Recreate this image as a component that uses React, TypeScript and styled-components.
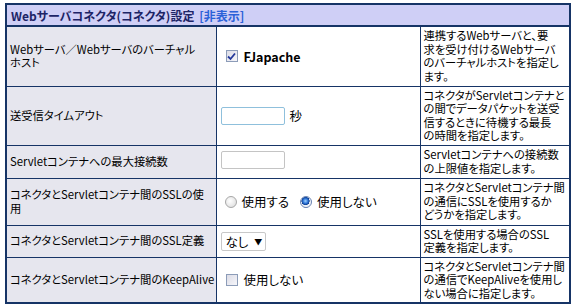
import React from 'react';
import styled, { createGlobalStyle } from 'styled-components';

const GlobalStyle = createGlobalStyle`
  body {
    margin: 0;
    padding: 3px 0 0 5px;
    background: #ffffff;
    font-family: 'Noto Sans CJK JP', 'Liberation Sans', sans-serif;
    font-feature-settings: 'palt';
    font-size: 12px;
    color: #000;
  }
`;

type Row = {
  label: React.ReactNode;
  control: React.ReactNode;
  desc: React.ReactNode;
  height: number;
};

function App() {
  const rows: Row[] = [
    {
      label: (
        <>
          Webサーバ／Webサーバのバーチャル
          <br />
          ホスト
        </>
      ),
      control: (
        <Inline>
          <CheckBox checked />
          <BoldText>FJapache</BoldText>
        </Inline>
      ),
      desc: (
        <>
          連携するWebサーバと、要
          <br />
          求を受け付けるWebサーバ
          <br />
          のバーチャルホストを指定し
          <br />
          ます。
        </>
      ),
      height: 60,
    },
    {
      label: '送受信タイムアウト',
      control: (
        <Inline>
          <TextBox $tone="focus" />
          <Unit>秒</Unit>
        </Inline>
      ),
      desc: (
        <>
          コネクタがServletコンテナと
          <br />
          の間でデータパケットを送受
          <br />
          信するときに待機する最長
          <br />
          の時間を指定します。
        </>
      ),
      height: 59,
    },
    {
      label: 'Servletコンテナへの最大接続数',
      control: <TextBox $tone="plain" />,
      desc: (
        <>
          Servletコンテナへの接続数
          <br />
          の上限値を指定します。
        </>
      ),
      height: 33,
    },
    {
      label: (
        <>
          コネクタとServletコンテナ間のSSLの使
          <br />
          用
        </>
      ),
      control: (
        <Inline>
          <RadioItem>
            <Radio />
            使用する
          </RadioItem>
          <RadioItem>
            <Radio checked />
            使用しない
          </RadioItem>
        </Inline>
      ),
      desc: (
        <>
          コネクタとServletコンテナ間
          <br />
          の通信にSSLを使用するか
          <br />
          どうかを指定します。
        </>
      ),
      height: 47,
    },
    {
      label: 'コネクタとServletコンテナ間のSSL定義',
      control: (
        <SelectBox>
          なし<Arrow>▼</Arrow>
        </SelectBox>
      ),
      desc: (
        <>
          SSLを使用する場合のSSL
          <br />
          定義を指定します。
        </>
      ),
      height: 32,
    },
    {
      label: 'コネクタとServletコンテナ間のKeepAlive',
      control: (
        <Inline>
          <CheckBox />
          <PlainText>使用しない</PlainText>
        </Inline>
      ),
      desc: (
        <>
          コネクタとServletコンテナ間
          <br />
          の通信でKeepAliveを使用し
          <br />
          ない場合に指定します。
        </>
      ),
      height: 46,
    },
  ];

  return (
    <>
      <GlobalStyle />
      <Table>
        <colgroup>
          <col style={{ width: 210 }} />
          <col style={{ width: 204 }} />
          <col />
        </colgroup>
        <tbody>
          <tr>
            <HeaderCell colSpan={3}>
              Webサーバコネクタ(コネクタ)設定 <Toggle>[非表示]</Toggle>
            </HeaderCell>
          </tr>
          {rows.map((row, i) => (
            <tr key={i} style={{ height: row.height }}>
              <LabelCell>{row.label}</LabelCell>
              <ValueCell>{row.control}</ValueCell>
              <DescCell>{row.desc}</DescCell>
            </tr>
          ))}
        </tbody>
      </Table>
    </>
  );
}

function CheckBox({ checked }: { checked?: boolean }) {
  return (
    <Box>
      {checked && (
        <svg width="9" height="9" viewBox="0 0 9 9">
          <path d="M1 4.5 L3.5 7 L8 1.5" fill="none" stroke="#23389a" strokeWidth="1.8" />
        </svg>
      )}
    </Box>
  );
}

function Radio({ checked }: { checked?: boolean }) {
  return <RadioDot $checked={!!checked} />;
}

export default App;

const Table = styled.table`
  width: 566px;
  border-collapse: collapse;
  border: 2px solid #163466;
  table-layout: fixed;
`;

const HeaderCell = styled.td`
  height: 20px;
  padding: 0 4px;
  background: #cfcff6;
  border-bottom: 2px solid #163466;
  font-weight: bold;
  font-size: 12px;
  color: #1d2466;
  white-space: nowrap;
`;

const Toggle = styled.span`
  color: #2b61d8;
  margin-left: 2px;
`;

const TextCell = styled.td`
  padding: 0 3px;
  border: 1px solid #163466;
  vertical-align: middle;
  font-size: 11.3px;
  line-height: 13.5px;
  white-space: nowrap;
  overflow: hidden;
`;

const LabelCell = styled(TextCell)`
  background: #e6e6ee;
`;

const DescCell = styled(TextCell)`
  background: #ffffff;
`;

const ValueCell = styled.td`
  padding: 0 3px;
  background: #ffffff;
  border: 1px solid #163466;
  vertical-align: middle;
`;

const Inline = styled.div`
  display: flex;
  align-items: center;
`;

const Box = styled.span`
  display: inline-flex;
  align-items: center;
  justify-content: center;
  box-sizing: border-box;
  width: 12px;
  height: 12px;
  margin-left: 6px;
  margin-right: 6px;
  border: 1px solid #8c9cb8;
  background: linear-gradient(135deg, #dcdce6, #f6f6fa);
`;

const BoldText = styled.span`
  font-weight: bold;
  font-size: 12.5px;
`;

const PlainText = styled.span`
  font-size: 12.5px;
`;

const TextBox = styled.span<{ $tone: 'focus' | 'plain' }>`
  display: inline-block;
  box-sizing: border-box;
  width: 64px;
  height: 18px;
  margin-left: 1px;
  border: 1px solid ${(p) => (p.$tone === 'focus' ? '#8fc0dc' : '#c4c4c4')};
  border-radius: 2px;
  background: #fff;
`;

const Unit = styled.span`
  margin-left: 5px;
  font-size: 12.5px;
`;

const RadioItem = styled.label`
  display: inline-flex;
  align-items: center;
  font-size: 12.5px;
  margin-left: 5px;
  margin-right: 6px;
`;

const RadioDot = styled.span<{ $checked: boolean }>`
  display: inline-block;
  box-sizing: border-box;
  width: 12px;
  height: 12px;
  margin-right: 5px;
  border-radius: 50%;
  border: 1px solid ${(p) => (p.$checked ? '#6d86b3' : '#a8a8a8')};
  background: ${(p) =>
    p.$checked
      ? 'radial-gradient(circle at 45% 40%, #9fd3ff 0, #2d74d6 30%, #0e3f92 48%, #e9eef6 52%, #ffffff 100%)'
      : 'radial-gradient(circle at 40% 40%, #ffffff 0, #e4e4e4 70%, #c8c8c8 100%)'};
`;

const SelectBox = styled.span`
  display: inline-flex;
  align-items: center;
  box-sizing: border-box;
  width: 45px;
  height: 19px;
  margin-left: 1px;
  padding-left: 4px;
  border: 1px solid #c8c8c8;
  border-radius: 2px;
  font-size: 12.5px;
`;

const Arrow = styled.span`
  font-size: 8px;
  margin-left: 6px;
`;
